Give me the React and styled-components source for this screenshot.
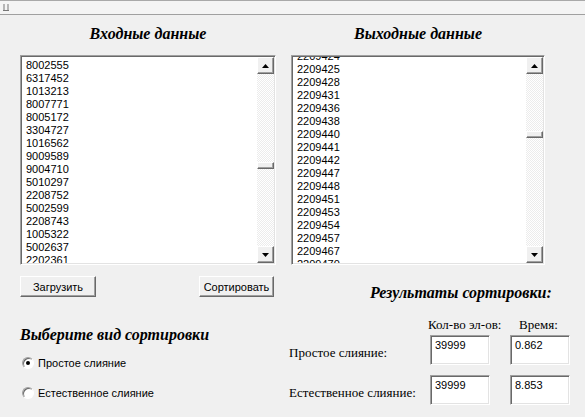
import React from 'react';
import styled, {createGlobalStyle} from 'styled-components';

const GlobalStyle = createGlobalStyle`
  body {
    margin: 0;
    background: #f0f0f0;
    font-family: "Liberation Sans", Arial, sans-serif;
  }
`;

const Window = styled.div`
  width: 585px;
  height: 417px;
  overflow: hidden;
  background: #f0f0f0;
  display: flex;
  flex-direction: column;
`;

const TopBar = styled.div`
  height: 13px;
  border-top: 1px solid #a9a9a9;
  border-bottom: 1px solid #a0a0a0;
  background: #f4f4f4;
  display: flex;
  align-items: center;
  padding-left: 2px;
`;

const Body = styled.div`
  display: flex;
  flex-direction: column;
  padding-left: 20px;
`;

const Columns = styled.div`
  display: flex;
  gap: ${({$gap}) => $gap}px;
`;

const Column = styled.div`
  flex: none;
  display: flex;
  flex-direction: column;
  width: ${({$w}) => $w}px;
`;

const Title = styled.h2`
  margin: 0;
  height: 40px;
  display: flex;
  align-items: center;
  justify-content: center;
  padding-bottom: 3px;
  box-sizing: border-box;
  font-family: "Liberation Serif", "Times New Roman", serif;
  font-style: italic;
  font-weight: bold;
  font-size: 16px;
  color: #000;
`;

const ListBox = styled.div`
  height: 210px;
  box-sizing: border-box;
  display: flex;
  background: #fff;
  border: 1px solid;
  border-color: #a0a0a0 #ffffff #ffffff #a0a0a0;
  box-shadow: inset 1px 1px 0 #696969, inset -1px -1px 0 #e3e3e3;
  padding: 1px;
`;

const Items = styled.div`
  flex: 1;
  overflow: hidden;
  padding-left: 4px;
`;

const ItemsInner = styled.div`
  margin-top: ${({$offset}) => $offset}px;
`;

const Item = styled.div`
  height: 13px;
  line-height: 13px;
  font-size: 11px;
  color: #000;
  white-space: nowrap;
`;

const ScrollBar = styled.div`
  width: 17px;
  display: flex;
  flex-direction: column;
  background-color: #f9f9f9;
  background-image: repeating-conic-gradient(#ececec 0 25%, #ffffff 0 50%);
  background-size: 2px 2px;
`;

const Raised = styled.div`
  box-sizing: border-box;
  background: #f0f0f0;
  border: 1px solid;
  border-color: #ffffff #696969 #696969 #ffffff;
  box-shadow: inset -1px -1px 0 #a0a0a0, inset 1px 1px 0 #f0f0f0;
`;

const ArrowButton = styled(Raised)`
  height: 17px;
  display: flex;
  align-items: center;
  justify-content: center;
`;

const Track = styled.div`
  flex: 1;
  display: flex;
  flex-direction: column;
`;

const Thumb = styled(Raised)`
  height: 7px;
  flex: none;
`;

const ButtonRow = styled.div`
  display: flex;
  justify-content: space-between;
  margin-top: 11px;
  padding-right: 2px;
`;

const Button = styled(Raised)`
  height: 21px;
  width: ${({$w}) => $w}px;
  display: flex;
  align-items: center;
  justify-content: center;
  font-size: 11px;
  color: #000;
`;

const SubTitle = styled.h3`
  margin: 29px 0 0;
  font-family: "Liberation Serif", "Times New Roman", serif;
  font-style: italic;
  font-weight: bold;
  font-size: 16px;
  line-height: 18px;
  color: #000;
`;

const RadioList = styled.div`
  display: flex;
  flex-direction: column;
  gap: 17px;
  margin-top: 12px;
  padding-left: 2px;
`;

const RadioRow = styled.label`
  display: flex;
  align-items: center;
  gap: 4px;
  height: 13px;
  font-size: 11px;
  color: #000;
`;

const RadioCircle = styled.span`
  width: 12px;
  height: 12px;
  box-sizing: border-box;
  border-radius: 50%;
  background: #fff;
  border: 1px solid;
  border-color: #a0a0a0 #ffffff #ffffff #a0a0a0;
  box-shadow: inset 1px 1px 0 #696969;
  display: flex;
  align-items: center;
  justify-content: center;

  &::after {
    content: '';
    width: 4px;
    height: 4px;
    border-radius: 50%;
    background: ${({$checked}) => ($checked ? '#000' : 'transparent')};
  }
`;

const Results = styled.div`
  flex: none;
  display: flex;
  flex-direction: column;
  margin-top: 19px;
`;

const ResultsTitle = styled.h3`
  margin: 0 0 0 81px;
  font-family: "Liberation Serif", "Times New Roman", serif;
  font-style: italic;
  font-weight: bold;
  font-size: 16px;
  line-height: 18px;
  color: #000;
  white-space: nowrap;
`;

const ResultsGrid = styled.div`
  display: grid;
  grid-template-columns: 121px 60px 60px;
  grid-template-rows: 18px 30px 30px;
  column-gap: 20px;
  row-gap: 10px;
  margin-top: 5px;
  font-family: "Liberation Serif", "Times New Roman", serif;
  font-size: 13px;
  color: #000;
`;

const ColHead = styled.div`
  align-self: end;
  line-height: 15px;
  margin-bottom: -7px;
  margin-left: ${({$ml}) => $ml}px;
  white-space: nowrap;
`;

const RowLabel = styled.div`
  align-self: center;
  padding-top: 5px;
  white-space: nowrap;
`;

const Field = styled.div`
  box-sizing: border-box;
  background: #fff;
  border: 1px solid;
  border-color: #a0a0a0 #ffffff #ffffff #a0a0a0;
  box-shadow: inset 1px 1px 0 #696969, inset -1px -1px 0 #e3e3e3;
  padding: 3px 0 0 4px;
  font-family: "Liberation Sans", Arial, sans-serif;
  font-size: 11px;
  line-height: 13px;
`;

const leftItems = [
  '8002555', '6317452', '1013213', '8007771', '8005172', '3304727',
  '1016562', '9009589', '9004710', '5010297', '2208752', '5002599',
  '2208743', '1005322', '5002637', '2202361',
];

const rightItems = [
  '2209424', '2209425', '2209428', '2209431', '2209436', '2209438',
  '2209440', '2209441', '2209442', '2209447', '2209448', '2209451',
  '2209453', '2209454', '2209457', '2209467', '2209470',
];

const Arrow = ({down}) => (
  <svg width="7" height="4" viewBox="0 0 7 4">
    <path d={down ? 'M0 0H7L3.5 4Z' : 'M0 4H7L3.5 0Z'} fill="#000" />
  </svg>
);

const List = ({items, offset, thumbTop}) => (
  <ListBox>
    <Items>
      <ItemsInner $offset={offset}>
        {items.map(item => (
          <Item key={item}>{item}</Item>
        ))}
      </ItemsInner>
    </Items>
    <ScrollBar>
      <ArrowButton>
        <Arrow />
      </ArrowButton>
      <Track>
        <div style={{height: thumbTop}} />
        <Thumb />
      </Track>
      <ArrowButton>
        <Arrow down />
      </ArrowButton>
    </ScrollBar>
  </ListBox>
);

const App = () => {
  return (
    <Window>
      <GlobalStyle />
      <TopBar>
        <svg width="8" height="7" viewBox="0 0 8 7">
          <path d="M2 0V6M6 0V6M1 6.5H7" stroke="#777" strokeWidth="1" />
        </svg>
      </TopBar>
      <Body>
        <Columns $gap={15}>
          <Column $w={256}>
            <Title>Входные данные</Title>
            <List items={leftItems} offset={2} thumbTop={88} />
          </Column>
          <Column $w={254}>
            <Title>Выходные данные</Title>
            <List items={rightItems} offset={-7} thumbTop={57} />
          </Column>
        </Columns>
        <Columns $gap={13}>
          <Column $w={256}>
            <ButtonRow>
              <Button $w={76}>Загрузить</Button>
              <Button $w={75}>Сортировать</Button>
            </ButtonRow>
            <SubTitle>Выберите вид сортировки</SubTitle>
            <RadioList>
              <RadioRow>
                <RadioCircle $checked />
                Простое слияние
              </RadioRow>
              <RadioRow>
                <RadioCircle />
                Естественное слияние
              </RadioRow>
            </RadioList>
          </Column>
          <Results>
            <ResultsTitle>Результаты сортировки:</ResultsTitle>
            <ResultsGrid>
              <div />
              <ColHead $ml={-2}>Кол-во эл-ов:</ColHead>
              <ColHead $ml={9}>Время:</ColHead>
              <RowLabel>Простое слияние:</RowLabel>
              <Field>39999</Field>
              <Field>0.862</Field>
              <RowLabel>Естественное слияние:</RowLabel>
              <Field>39999</Field>
              <Field>8.853</Field>
            </ResultsGrid>
          </Results>
        </Columns>
      </Body>
    </Window>
  );
};

export default App;
